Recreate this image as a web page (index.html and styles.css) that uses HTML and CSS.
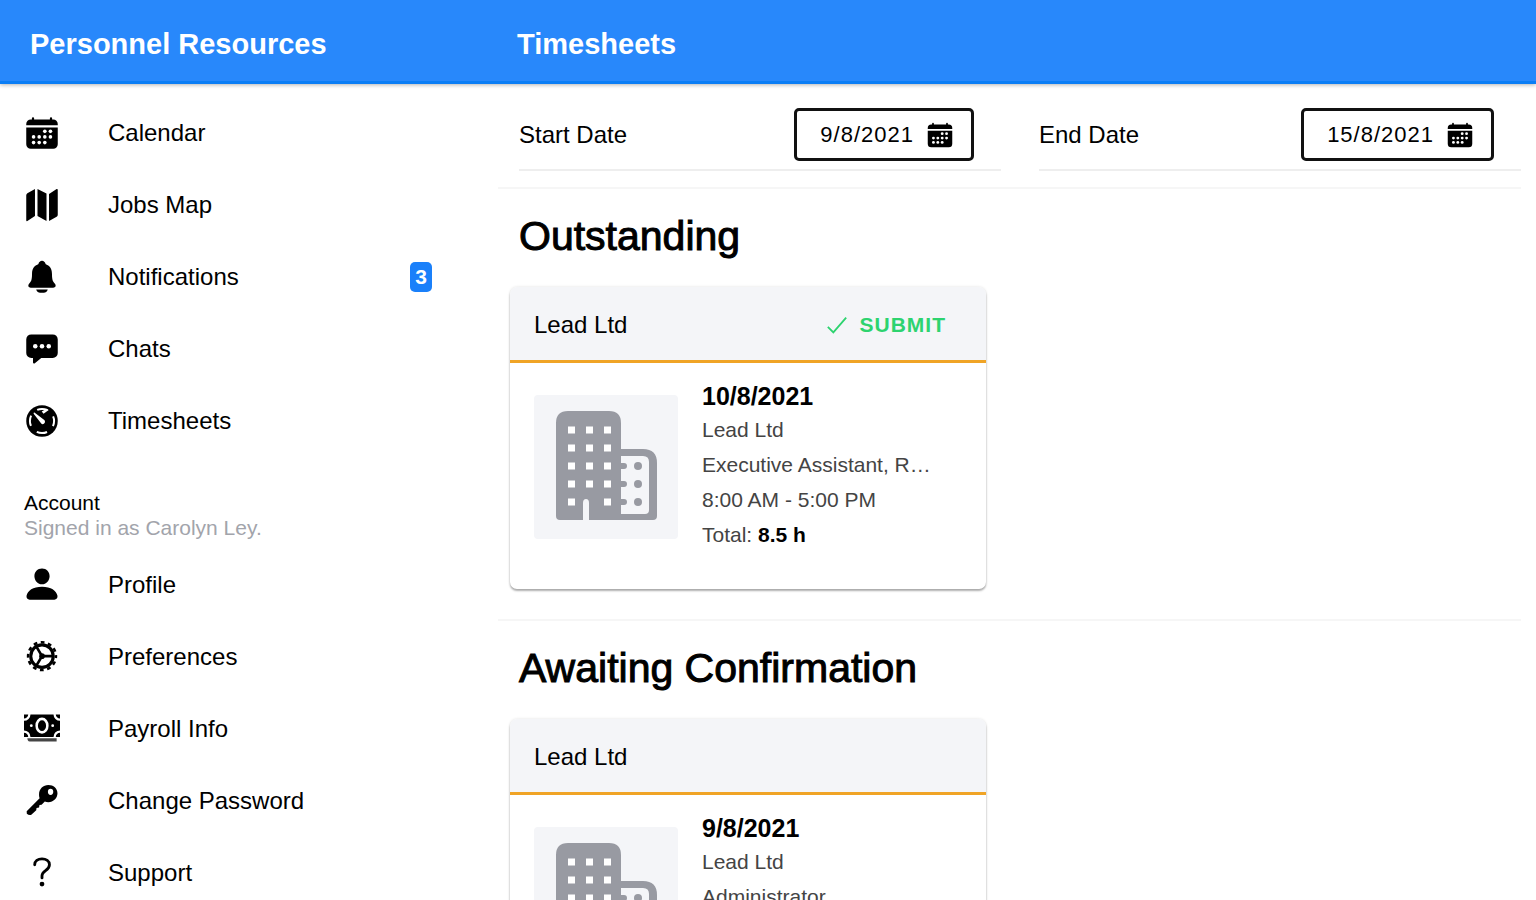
FILE: index.html
```html
<!DOCTYPE html>
<html lang="en">
<head>
    <meta charset="UTF-8">
    <meta name="viewport" content="width=device-width, initial-scale=1.0">
    <title>Timesheets - Personnel Resources</title>
    <link rel="stylesheet" href="styles.css">
</head>
<body>

    <!-- Shared pictures -->
    <svg class="sprite" aria-hidden="true">
        <symbol id="building" viewBox="0 0 144 144">
            <path fill="#989aa2" d="M22 28q0-12 12-12h41q12 0 12 12v26h22q14 0 14 14v53q0 4-4 4H55v-17q0-4-3-4t-3 4v17H26q-4 0-4-4z"/>
            <path fill="#f4f5f8" d="M87 61h22q6 0 6 6v48q0 4-4 4H87z"/>
            <path stroke="#fff" stroke-width="7" stroke-linecap="butt" stroke-dasharray="7 11" d="M34 35h43M34 53h43M34 71h43M34 89h43M34 107h8M70 107h7"/>
            <g fill="#989aa2">
                <path d="M87 68h3a3 3 0 010 6h-3zM87 86h3a3 3 0 010 6h-3zM87 104h3a3 3 0 010 6h-3z"/>
                <circle cx="104" cy="71" r="4"/>
                <circle cx="104" cy="89" r="4"/>
                <circle cx="104" cy="107" r="4"/>
            </g>
        </symbol>
        <symbol id="calendar" viewBox="0 0 512 512">
            <path d="M480 128a64 64 0 00-64-64h-16V48a16 16 0 00-32 0v16H144V48a16 16 0 00-32 0v16H96a64 64 0 00-64 64v16h448zM32 176v240a64 64 0 0064 64h320a64 64 0 0064-64V176z"/>
            <g fill="#fff">
                <circle cx="296" cy="232" r="26"/><circle cx="376" cy="232" r="26"/>
                <circle cx="136" cy="312" r="26"/><circle cx="216" cy="312" r="26"/><circle cx="296" cy="312" r="26"/><circle cx="376" cy="312" r="26"/>
                <circle cx="136" cy="392" r="26"/><circle cx="216" cy="392" r="26"/><circle cx="296" cy="392" r="26"/>
            </g>
        </symbol>
    </svg>

    <header class="toolbar">
        <div class="toolbar-menu">Personnel Resources</div>
        <h1 class="toolbar-title">Timesheets</h1>
    </header>

    <div class="layout">
        <!-- Side Menu -->
        <nav class="menu">
            <a class="menu-item" href="#">
                <svg class="icon" viewBox="0 0 512 512"><use href="#calendar"/></svg>
                <span>Calendar</span>
            </a>
            <a class="menu-item" href="#">
                <svg class="icon" viewBox="0 0 512 512"><path d="M48 88L156 28v386L48 484q-16 6-16-12V118q0-20 16-30zM192 28l128 64v392l-128-70zM356 98l108-68q16-6 16 12v352q0 20-16 30l-108 60z"/></svg>
                <span>Jobs Map</span>
            </a>
            <a class="menu-item" href="#">
                <svg class="icon" viewBox="0 0 512 512"><path d="M440 352c-24-30-42-44-42-140 0-88-44-119-81-134-5-2-10-7-11-12-7-22-25-42-50-42s-43 20-50 42c-1 5-6 10-11 12-37 15-81 46-81 134 0 96-18 110-42 140-22 28-6 56 24 56h320c30 0 46-28 24-56zM184 432a8 8 0 00-8 9c4 30 40 40 80 40s75-10 79-40a8 8 0 00-8-9z"/></svg>
                <span>Notifications</span>
                <span class="badge">3</span>
            </a>
            <a class="menu-item" href="#">
                <svg class="icon" viewBox="0 0 512 512"><path d="M408 48H104a72 72 0 00-72 72v192a72 72 0 0072 72h24v64a16 16 0 0026 12l91-76h163a72 72 0 0072-72V120a72 72 0 00-72-72z"/><g fill="#fff"><circle cx="160" cy="216" r="32"/><circle cx="256" cy="216" r="32"/><circle cx="352" cy="216" r="32"/></g></svg>
                <span>Chats</span>
            </a>
            <a class="menu-item" href="#">
                <svg class="icon" viewBox="0 0 512 512"><circle cx="256" cy="256" r="224"/><circle cx="256" cy="256" r="172" fill="none" stroke="#fff" stroke-width="28" stroke-dasharray="150 120" stroke-dashoffset="75"/><path fill="#fff" d="M153 137l140 108q16 24-6 46t-42 2L137 153q-4-18 16-16zM252 120l70-40 30 20-74 52z"/></svg>
                <span>Timesheets</span>
            </a>

            <div class="menu-header">
                <div>Account</div>
                <div class="menu-note">Signed in as Carolyn Ley.</div>
            </div>

            <a class="menu-item" href="#">
                <svg class="icon" viewBox="0 0 512 512"><path d="M256 246c58 0 105-50 108-112C366 72 320 22 256 22S146 72 148 134c3 62 50 112 108 112zM432 464H80c-28 0-50-24-44-54 14-72 92-128 220-128s206 56 220 128c6 30-16 54-44 54z"/></svg>
                <span>Profile</span>
            </a>
            <a class="menu-item" href="#">
                <svg class="icon" viewBox="0 0 512 512"><g fill="none" stroke="#000"><circle cx="256" cy="244" r="160" stroke-width="44"/><circle cx="256" cy="244" r="198" stroke-width="36" stroke-dasharray="54 50" stroke-dashoffset="27"/><path stroke-width="38" d="M256 244h170M256 244L170 98M256 244l-86 146"/></g><circle cx="256" cy="244" r="40"/></svg>
                <span>Preferences</span>
            </a>
            <a class="menu-item" href="#">
                <svg class="icon" viewBox="0 0 512 512"><path d="M92 48h328a92 92 0 0092 92v136a92 92 0 00-92 92H92a92 92 0 00-92-92V140a92 92 0 0092-92zM0 48h60A60 60 0 010 108zM512 48h-60a60 60 0 0060 60zM0 368h60a60 60 0 00-60-60zM512 368h-60a60 60 0 0160-60z"/><path fill="#444" d="M48 388h416v44H80q-32 0-32-44z"/><ellipse cx="256" cy="208" rx="76" ry="96" fill="none" stroke="#fff" stroke-width="36"/><circle cx="104" cy="208" r="20" fill="#fff"/><circle cx="408" cy="208" r="20" fill="#fff"/></svg>
                <span>Payroll Info</span>
            </a>
            <a class="menu-item" href="#">
                <svg class="icon" viewBox="0 0 512 512"><path fill-rule="evenodd" d="M346 28c74 0 130 50 130 118s-56 126-130 126c-18 0-36-4-50-10l-46 48-30 4-6 34-36 8-4 32-70 64q-34 10-64-14l-2-36 184-186c-8-18-8-40-8-58 0-74 60-130 132-130zM378 82a38 44 0 100 88 38 44 0 000-88z"/></svg>
                <span>Change Password</span>
            </a>
            <a class="menu-item" href="#">
                <svg class="icon" viewBox="0 0 512 512"><path fill="none" stroke="#000" stroke-width="40" stroke-linecap="round" d="M152 140c0-52 46-86 104-86s106 32 106 84c0 84-106 84-106 158v30"/><circle cx="256" cy="414" r="34"/></svg>
                <span>Support</span>
            </a>
        </nav>

        <!-- Timesheets -->
        <main class="content">
            <div class="filters">
                <div class="filter">
                    <span id="start-label">Start Date</span>
                    <button class="date-button" type="button" aria-labelledby="start-label start-date">
                        <span id="start-date">9/8/2021</span>
                        <svg class="date-icon" viewBox="0 0 512 512"><use href="#calendar"/></svg>
                    </button>
                </div>
                <div class="filter">
                    <span id="end-label">End Date</span>
                    <button class="date-button" type="button" aria-labelledby="end-label end-date">
                        <span id="end-date">15/8/2021</span>
                        <svg class="date-icon" viewBox="0 0 512 512"><use href="#calendar"/></svg>
                    </button>
                </div>
            </div>

            <section class="group">
                <h2>Outstanding</h2>
                <article class="card">
                    <div class="card-header">
                        <span>Lead Ltd</span>
                        <button class="submit-button" type="button">
                            <svg class="check" viewBox="0 0 24 24"><path fill="none" stroke="#2dd36f" stroke-width="2" d="M2 14l6 6L22 4"/></svg>
                            SUBMIT
                        </button>
                    </div>
                    <div class="card-body">
                        <svg class="thumb" viewBox="0 0 144 144"><use href="#building"/></svg>
                        <div class="details">
                            <h3>10/8/2021</h3>
                            <p>Lead Ltd</p>
                            <p>Executive Assistant, R…</p>
                            <p>8:00 AM - 5:00 PM</p>
                            <p>Total: <b>8.5 h</b></p>
                        </div>
                    </div>
                </article>
            </section>

            <section class="group">
                <h2>Awaiting Confirmation</h2>
                <article class="card">
                    <div class="card-header">
                        <span>Lead Ltd</span>
                    </div>
                    <div class="card-body">
                        <svg class="thumb" viewBox="0 0 144 144"><use href="#building"/></svg>
                        <div class="details">
                            <h3>9/8/2021</h3>
                            <p>Lead Ltd</p>
                            <p>Administrator</p>
                        </div>
                    </div>
                </article>
            </section>
        </main>
    </div>

</body>
</html>
```

FILE: styles.css
```css
* {
    box-sizing: border-box;
}

body {
    margin: 0;
    height: 100vh;
    display: flex;
    flex-direction: column;
    overflow: hidden;
    background-color: #fff;
    color: #000;
    font-family: "Liberation Sans", Arial, sans-serif;
    font-size: 24px;
}

h1, h2, h3, p {
    margin: 0;
    font-weight: normal;
}

button {
    font-family: inherit;
    cursor: pointer;
}

.sprite {
    display: none;
}

/* Toolbar */
.toolbar {
    display: flex;
    flex: none;
    align-items: center;
    height: 84px;
    padding-top: 8px;
    border-bottom: 3px solid #0a7df5;
    background-color: #2888fb;
    color: #fff;
    font-size: 29px;
    font-weight: bold;
    box-shadow: 0 1px 4px rgba(0, 0, 0, 0.3);
    z-index: 1;
}

.toolbar-menu {
    width: 486px;
    padding-left: 30px;
}

.toolbar-title {
    padding-left: 31px;
    font-size: 29px;
    font-weight: bold;
}

.layout {
    display: flex;
    flex: 1;
    min-height: 0;
}

/* Side Menu */
.menu {
    flex: none;
    width: 456px;
    padding-top: 13px;
}

.menu-item {
    display: flex;
    align-items: center;
    height: 72px;
    padding: 0 24px;
    color: #000;
    text-decoration: none;
}

.icon {
    width: 36px;
    height: 36px;
    margin-right: 48px;
}

.badge {
    margin-left: auto;
    width: 22px;
    border-radius: 5px;
    background-color: #1a80fa;
    color: #fff;
    font-size: 21px;
    font-weight: bold;
    line-height: 30px;
    text-align: center;
}

.menu-header {
    padding: 33px 24px 9px;
    font-size: 21px;
    line-height: 25px;
}

.menu-note {
    color: #a2a4ab;
}

/* Date Filters */
.content {
    flex: 1;
    min-width: 0;
    padding: 0 15px 0 42px;
}

.filters {
    display: grid;
    grid-template-columns: 1fr 1fr;
    gap: 38px;
    height: 103px;
    padding: 0 0 16px 21px;
}

.filter {
    display: flex;
    align-items: center;
    justify-content: space-between;
    padding: 16px 27px 0 0;
    border-bottom: 2px solid #eee;
}

.date-button {
    display: flex;
    align-items: center;
    gap: 12px;
    height: 53px;
    padding: 0 17px 0 23px;
    border: 3px solid #111;
    border-radius: 5px;
    background-color: #fff;
    color: #000;
    font-size: 22px;
    letter-spacing: 1px;
}

.date-icon {
    width: 28px;
    height: 28px;
}

/* Cards */
.group {
    height: 432px;
    border-top: 2px solid #f6f6f6;
}

.group h2 {
    padding: 22px 21px 26px;
    font-size: 41px;
    line-height: 50px;
    -webkit-text-stroke: 1px #000;
}

.card {
    width: 476px;
    height: 302px;
    margin-left: 12px;
    border-radius: 7px;
    overflow: hidden;
    box-shadow: 0 2px 2px rgba(0, 0, 0, 0.3), 0 0 3px rgba(0, 0, 0, 0.12);
}

.card-header {
    display: flex;
    align-items: center;
    justify-content: space-between;
    height: 76px;
    padding: 2px 40px 0 24px;
    border-bottom: 3px solid #f0a426;
    background-color: #f4f5f8;
}

.submit-button {
    display: flex;
    align-items: center;
    gap: 12px;
    padding: 0;
    border: none;
    background: none;
    color: #2dd36f;
    font-size: 21px;
    font-weight: bold;
    letter-spacing: 1px;
}

.check {
    width: 22px;
    height: 22px;
}

.card-body {
    display: flex;
    gap: 24px;
    padding: 17px 24px;
}

.thumb {
    flex: none;
    width: 144px;
    height: 144px;
    margin-top: 15px;
    border-radius: 4px;
    background-color: #f4f5f8;
}

.details {
    color: #444;
    font-size: 21px;
    line-height: 35px;
}

.details h3 {
    color: #000;
    font-size: 25px;
    font-weight: bold;
    line-height: 32px;
}

.details b {
    color: #000;
}
```
